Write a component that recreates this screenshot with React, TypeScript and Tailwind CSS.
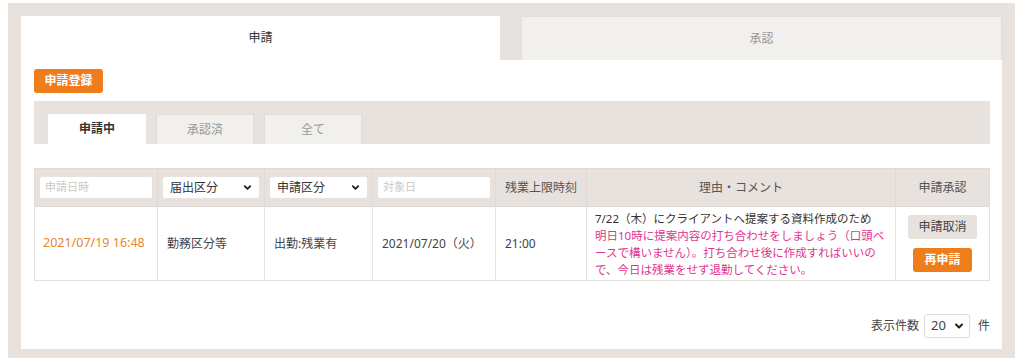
import { ChevronDown } from "lucide-react";

const font = {
  fontFamily: '"Noto Sans", "Noto Sans CJK JP", sans-serif',
};

export default function App() {
  return (
    <main className="h-[364px] w-[1024px] bg-white pl-[8px] pt-[3px] text-[#333]" style={font}>
      <div className="w-[1007px] bg-[#e8e2df] px-[13px] pb-[9px] pt-[13px]">
        <div className="flex gap-[21px]">
          <div className="flex h-[44px] flex-1 items-center justify-center rounded-t-[2px] bg-white text-[12px] text-[#333]">
            申請
          </div>
          <div className="flex h-[44px] flex-1 items-center justify-center border border-b-0 border-[#e4dfdb] bg-[#f2f0ed] text-[12px] text-[#999]">
            承認
          </div>
        </div>

        <section className="bg-white pb-[11px] pl-[13px] pr-[12px] pt-[9px]">
          <button
            type="button"
            className="flex h-[24px] w-[69px] items-center justify-center rounded-[3px] bg-[#ef7d1b] text-[12px] font-bold text-white"
          >
            申請登録
          </button>

          <div className="mt-[8px] flex h-[43px] items-end gap-[10px] bg-[#e8e2df] pl-[14px]">
            <SubTab label="申請中" active />
            <SubTab label="承認済" />
            <SubTab label="全て" />
          </div>

          <table className="mt-[24px] w-full border-collapse text-[12px]">
            <colgroup>
              <col className="w-[123px]" />
              <col className="w-[107px]" />
              <col className="w-[108px]" />
              <col className="w-[123px]" />
              <col className="w-[91px]" />
              <col className="w-[309px]" />
              <col />
            </colgroup>
            <thead>
              <tr className="h-[38px] bg-[#e8e2df]">
                <th className="border border-[#e0dad6] px-[5px] font-normal">
                  <TextBox placeholder="申請日時" />
                </th>
                <th className="border border-[#e0dad6] px-[5px] font-normal">
                  <SelectBox label="届出区分" />
                </th>
                <th className="border border-[#e0dad6] px-[5px] font-normal">
                  <SelectBox label="申請区分" />
                </th>
                <th className="border border-[#e0dad6] px-[5px] font-normal">
                  <TextBox placeholder="対象日" />
                </th>
                <th className="border border-[#e0dad6] font-normal text-[#555]">残業上限時刻</th>
                <th className="border border-[#e0dad6] font-normal text-[#555]">理由・コメント</th>
                <th className="border border-[#e0dad6] font-normal text-[#555]">申請承認</th>
              </tr>
            </thead>
            <tbody>
              <tr className="h-[74px] text-[#444]">
                <td className="border border-[#e6e2df] pl-[8px] text-[12.5px] text-[#e6862c]">2021/07/19 16:48</td>
                <td className="border border-[#e6e2df] pl-[9px]">勤務区分等</td>
                <td className="border border-[#e6e2df] pl-[9px]">出勤:残業有</td>
                <td className="border border-[#e6e2df] pl-[9px]">2021/07/20（火）</td>
                <td className="border border-[#e6e2df] pl-[9px]">21:00</td>
                <td className="border border-[#e6e2df] pl-[8px] pr-[4px] text-[11.5px] leading-[17px]">
                  <div className="text-[#333]">7/22（木）にクライアントへ提案する資料作成のため</div>
                  <div className="text-[#e0358f]">
                    明日10時に提案内容の打ち合わせをしましょう（口頭ベースで構いません）。打ち合わせ後に作成すればいいので、今日は残業をせず退勤してください。
                  </div>
                </td>
                <td className="border border-[#e6e2df]">
                  <div className="flex flex-col items-center gap-[9px]">
                    <button
                      type="button"
                      className="flex h-[24px] w-[69px] items-center justify-center rounded-[3px] bg-[#e8e2df] text-[12px] text-[#444]"
                    >
                      申請取消
                    </button>
                    <button
                      type="button"
                      className="flex h-[24px] w-[59px] items-center justify-center rounded-[3px] bg-[#ef7d1b] text-[12px] font-bold text-white"
                    >
                      再申請
                    </button>
                  </div>
                </td>
              </tr>
            </tbody>
          </table>

          <div className="mt-[33px] flex items-center justify-end gap-[5px] text-[12px] text-[#444]">
            <span>表示件数</span>
            <div className="flex h-[24px] w-[46px] items-center justify-between rounded-[3px] border border-[#ddd] bg-white pl-[6px] pr-[4px] text-[13px]">
              <span>20</span>
              <ChevronDown className="h-[12px] w-[12px] text-[#222]" strokeWidth={4} />
            </div>
            <span className="ml-[3px]">件</span>
          </div>
        </section>
      </div>
    </main>
  );
}

function SubTab({ label, active }: { label: string; active?: boolean }) {
  return (
    <div
      className={`flex h-[30px] w-[98px] items-center justify-center text-[12px] ${
        active ? "bg-white font-bold text-[#333]" : "border border-b-0 border-[#e2ddd9] bg-[#f2f0ed] text-[#999]"
      }`}
    >
      {label}
    </div>
  );
}

function TextBox({ placeholder }: { placeholder: string }) {
  return (
    <div className="flex h-[21px] items-center rounded-[2px] bg-white px-[5px] text-left text-[11px] text-[#c8c8c8]">
      {placeholder}
    </div>
  );
}

function SelectBox({ label }: { label: string }) {
  return (
    <div className="flex h-[21px] items-center justify-between rounded-[2px] bg-white pl-[7px] pr-[6px] text-[12px] text-[#333]">
      <span>{label}</span>
      <ChevronDown className="h-[11px] w-[11px] text-[#222]" strokeWidth={4} />
    </div>
  );
}
